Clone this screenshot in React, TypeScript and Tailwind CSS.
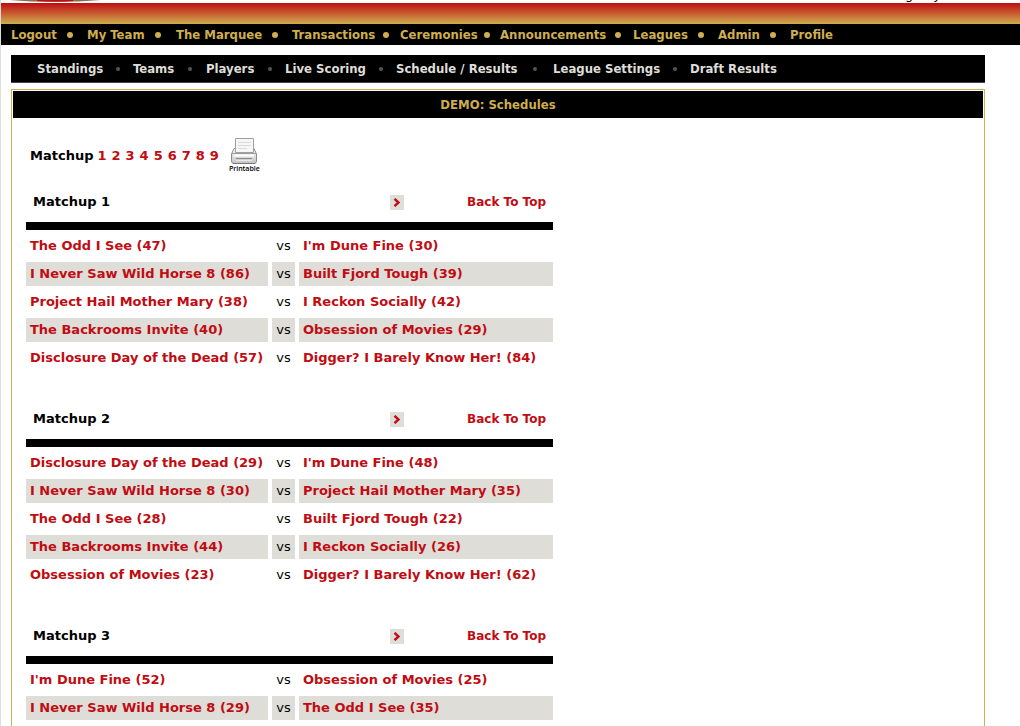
import React from 'react';

type Game = { home: string; away: string };

const mainNav = [
  { label: 'Logout', slot: 'w-[76px]' },
  { label: 'My Team', slot: 'w-[89px]' },
  { label: 'The Marquee', slot: 'w-[116px]' },
  { label: 'Transactions', slot: 'w-[108px]' },
  { label: 'Ceremonies', slot: 'w-[100px]' },
  { label: 'Announcements', slot: 'w-[133px]' },
  { label: 'Leagues', slot: 'w-[85px]' },
  { label: 'Admin', slot: 'w-[72px]' },
  { label: 'Profile', slot: '' },
];

const leagueNav = [
  { label: 'Standings', slot: 'w-24' },
  { label: 'Teams', slot: 'w-[73px]' },
  { label: 'Players', slot: 'w-[79px]' },
  { label: 'Live Scoring', slot: 'w-[111px]' },
  { label: 'Schedule / Results', slot: 'w-[157px]' },
  { label: 'League Settings', slot: 'w-[137px]' },
  { label: 'Draft Results', slot: '' },
];

const matchups: Game[][] = [
  [
    { home: 'The Odd I See (47)', away: "I'm Dune Fine (30)" },
    { home: 'I Never Saw Wild Horse 8 (86)', away: 'Built Fjord Tough (39)' },
    { home: 'Project Hail Mother Mary (38)', away: 'I Reckon Socially (42)' },
    { home: 'The Backrooms Invite (40)', away: 'Obsession of Movies (29)' },
    { home: 'Disclosure Day of the Dead (57)', away: 'Digger? I Barely Know Her! (84)' },
  ],
  [
    { home: 'Disclosure Day of the Dead (29)', away: "I'm Dune Fine (48)" },
    { home: 'I Never Saw Wild Horse 8 (30)', away: 'Project Hail Mother Mary (35)' },
    { home: 'The Odd I See (28)', away: 'Built Fjord Tough (22)' },
    { home: 'The Backrooms Invite (44)', away: 'I Reckon Socially (26)' },
    { home: 'Obsession of Movies (23)', away: 'Digger? I Barely Know Her! (62)' },
  ],
  [
    { home: "I'm Dune Fine (52)", away: 'Obsession of Movies (25)' },
    { home: 'I Never Saw Wild Horse 8 (29)', away: 'The Odd I See (35)' },
  ],
];

function Printer() {
  return (
    <svg width="28" height="27" viewBox="0 0 28 27" aria-hidden="true">
      <defs>
        <linearGradient id="tray" x1="0" y1="0" x2="0" y2="1">
          <stop offset="0" stopColor="#fafafa" />
          <stop offset="1" stopColor="#c4c4c4" />
        </linearGradient>
      </defs>
      <path d="M4 10.500 H24 L26.500 16 V23 Q26.500 25.500 24 25.500 H4 Q1.500 25.500 1.500 23 V16 Z" fill="url(#tray)" stroke="#8c8c8c" />
      <path d="M5.500 .5 H23.500 V14.500 H5.500 Z" fill="#f6f6f6" stroke="#a0a0a0" />
      <path d="M8 4.500 H21 M8 7.500 H21 M8 10.500 H17" stroke="#dadada" />
      <path d="M2 15.500 H26" stroke="#9c9c9c" />
      <path d="M4 17.500 H24" stroke="#fff" strokeWidth="2" />
      <path d="M6 20.500 H22" stroke="#8a8a8a" />
      <path d="M6 22.500 H22" stroke="#e8e8e8" />
      <path d="M3 25.500 H25" stroke="#777" />
    </svg>
  );
}

function Matchup({ number, games }: { number: number; games: Game[] }) {
  return (
    <section id={`matchup-${number}`} className="mb-[27px] w-[527px]">
      <div className="mb-0.5 box-content flex h-10 items-center border-b-8 border-black px-[7px]">
        <h2 className="w-[357px] text-[13px] font-bold">Matchup {number}</h2>
        <a
          href={`#matchup-${number + 1}`}
          aria-label="Next matchup"
          className="flex h-[15px] w-[14px] items-center justify-center bg-[#dfddd8]"
        >
          <svg width="8" height="9" viewBox="0 0 8 9" aria-hidden="true">
            <path d="M1.500 .8 L5.500 4.500 L1.500 8.200" fill="none" stroke="#c00c12" strokeWidth="2.400" />
          </svg>
        </a>
        <a href="#top" className="ml-auto text-[12px] font-bold text-[#c00c12]">
          Back To Top
        </a>
      </div>
      <table className="w-full border-separate border-spacing-0 text-[13px]">
        <tbody>
          {games.map((game) => (
            <tr key={game.home} className="group h-7">
              <td className="w-[246px] py-0.5 pr-1">
                <a href="#team" className="block h-6 px-1 leading-6 font-bold whitespace-nowrap text-[#c00c12] group-even:bg-[#dfddd8]">
                  {game.home}
                </a>
              </td>
              <td className="w-[27px] py-0.5 pr-1">
                <span className="block h-6 text-center leading-6 group-even:bg-[#dfddd8]">vs</span>
              </td>
              <td className="py-0.5">
                <a href="#team" className="block h-6 px-1 leading-6 font-bold whitespace-nowrap text-[#c00c12] group-even:bg-[#dfddd8]">
                  {game.away}
                </a>
              </td>
            </tr>
          ))}
        </tbody>
      </table>
    </section>
  );
}

export default function App() {
  return (
    <div id="top" className="h-screen overflow-hidden border-l border-[#dfddd8] bg-white font-['Verdana','DejaVu_Sans',sans-serif] text-black">
      <header>
        <div className="flex h-[3px] items-end justify-between overflow-hidden pr-[79px] pl-2">
          <svg width="92" height="3" viewBox="0 0 92 3" aria-hidden="true">
            <path d="M0 0 H92 Q70 2 46 2 Q22 2 0 0" fill="#84704a" />
            <path d="M28 0 H64 V1 Q46 2 28 1 Z" fill="#c00c12" />
          </svg>
          <div className="flex gap-5 text-[13px] leading-4">
            <span>g</span>
            <span>y</span>
          </div>
        </div>
        <div className="h-[21px] bg-linear-to-b/srgb from-[#c00c12] to-[#cfae4f]" />
        <nav className="bg-black pl-[10px] font-['Tahoma','DejaVu_Sans_Condensed','DejaVu_Sans',sans-serif] text-[13px] leading-[21px] font-bold text-[#cfae4f]">
          <ul className="flex">
            {mainNav.map((item) => (
              <li key={item.label} className={`flex items-center whitespace-nowrap ${item.slot}`}>
                <a href="#page">{item.label}</a>
                {item.slot && (
                  <span className="flex flex-1 justify-center pr-1">
                    <span className="size-[6px] rounded-full bg-[#cfae4f]" />
                  </span>
                )}
              </li>
            ))}
          </ul>
        </nav>
      </header>

      <main className="mt-[10px] mr-[35px] ml-[10px]">
        <nav className="border-b border-[#444] bg-black pl-[26px] font-['Tahoma','DejaVu_Sans_Condensed','DejaVu_Sans',sans-serif] text-[13px] leading-[27px] font-bold text-[#dfddd8]">
          <ul className="flex">
            {leagueNav.map((item) => (
              <li key={item.label} className={`flex items-center whitespace-nowrap ${item.slot}`}>
                <a href="#page">{item.label}</a>
                {item.slot && (
                  <span className="flex flex-1 justify-center">
                    <span className="size-1 rounded-full bg-[#555]" />
                  </span>
                )}
              </li>
            ))}
          </ul>
        </nav>

        <div className="mt-[6px] min-h-screen border border-[#cfae4f] p-px">
          <h1 className="bg-black text-center font-['Tahoma','DejaVu_Sans_Condensed','DejaVu_Sans',sans-serif] text-[13px] leading-[27px] font-bold text-[#cfae4f]">
            DEMO: Schedules
          </h1>
          <div className="px-[13px] pt-4">
            <div className="mb-1 flex h-11 items-center pl-1 text-[13px] font-bold">
              <span>Matchup</span>
              <ul className="ml-1 flex gap-[5px] text-[#c00c12]">
                {[1, 2, 3, 4, 5, 6, 7, 8, 9].map((n) => (
                  <li key={n}>
                    <a href={`#matchup-${n}`}>{n}</a>
                  </li>
                ))}
              </ul>
              <a
                href="#print"
                className="ml-[10px] flex flex-col items-center pb-0.5 font-['Open_Sans',sans-serif] text-[7px] leading-2 font-semibold"
              >
                <Printer />
                Printable
              </a>
            </div>
            {matchups.map((games, i) => (
              <Matchup key={i} number={i + 1} games={games} />
            ))}
          </div>
        </div>
      </main>
    </div>
  );
}
